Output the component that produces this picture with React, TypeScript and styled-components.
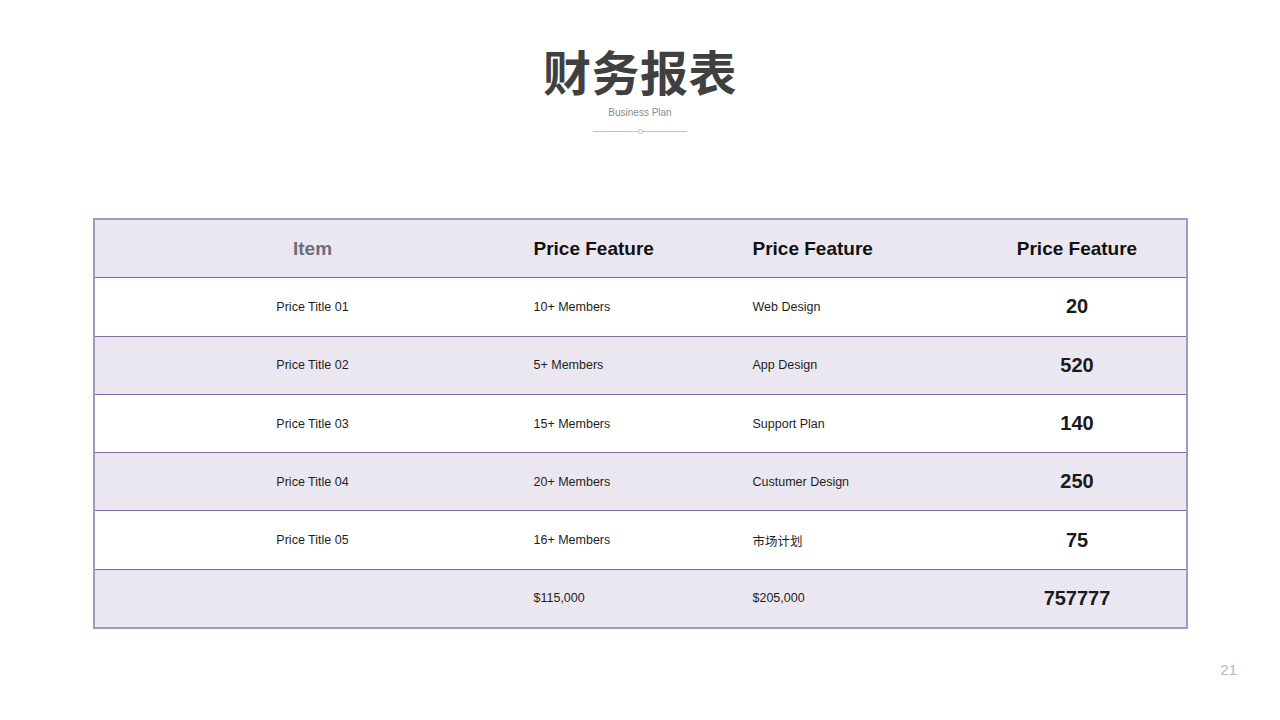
import styled, { createGlobalStyle } from 'styled-components';

const GlobalStyle = createGlobalStyle`
  html, body {
    margin: 0;
    padding: 0;
    background: #ffffff;
  }
  body {
    font-family: "Liberation Sans", Arial, "Noto Sans CJK SC", sans-serif;
  }
`;

const Page = styled.div`
  width: 1280px;
  height: 720px;
  box-sizing: border-box;
  padding-top: 40px;
  display: flex;
  flex-direction: column;
  align-items: center;
  position: relative;
  overflow: hidden;
`;

const Title = styled.h1`
  margin: 0;
  font-family: "Noto Sans CJK SC", sans-serif;
  font-size: 48px;
  font-weight: 700;
  line-height: 60px;
  color: #404040;
  letter-spacing: 0.5px;
`;

const Subtitle = styled.div`
  font-size: 10px;
  line-height: 14px;
  color: #8a8a8a;
  margin-top: 6px;
`;

const Divider = styled.div`
  display: flex;
  align-items: center;
  margin-top: 9px;
  width: 94px;
`;

const DividerLine = styled.div`
  flex: 1;
  height: 1px;
  background: #c4c4c4;
`;

const DividerDot = styled.div`
  width: 3px;
  height: 3px;
  border: 1px solid #bdbdbd;
  border-radius: 50%;
`;

const Table = styled.div`
  margin-top: 84px;
  width: 1095px;
  box-sizing: border-box;
  border: 2px solid #a996c0;
  display: grid;
  grid-template-columns: 436px 219px 219px 1fr;
`;

const Row = styled.div<{ $shade?: boolean; $last?: boolean }>`
  display: contents;
  & > div {
    background: ${(p) => (p.$shade ? '#ebe7f0' : '#ffffff')};
    border-bottom: ${(p) => (p.$last ? 'none' : '1px solid #85679c')};
  }
`;

const Cell = styled.div<{ $align?: 'left' | 'center' }>`
  height: 57.3px;
  display: flex;
  align-items: center;
  justify-content: ${(p) => (p.$align === 'center' ? 'center' : 'flex-start')};
  padding-left: ${(p) => (p.$align === 'center' ? '0' : '3px')};
  font-size: 12px;
  color: #1e1e1e;
`;

const HeadText = styled.span<{ $muted?: boolean }>`
  font-size: 19px;
  font-weight: 700;
  color: ${(p) => (p.$muted ? '#6e6c7a' : '#111111')};
`;

const Amount = styled.span`
  font-size: 20px;
  font-weight: 700;
  color: #1a1a1a;
`;

const SmallText = styled.span`
  font-size: 12.5px;
  color: #1e1e1e;
`;

const PageNumber = styled.div`
  position: absolute;
  right: 43px;
  top: 661px;
  font-size: 15px;
  color: #b8b8b8;
`;

const rows = [
  { title: 'Price Title 01', members: '10+ Members', plan: 'Web Design', value: '20' },
  { title: 'Price Title 02', members: '5+ Members', plan: 'App Design', value: '520' },
  { title: 'Price Title 03', members: '15+ Members', plan: 'Support Plan', value: '140' },
  { title: 'Price Title 04', members: '20+ Members', plan: 'Custumer Design', value: '250' },
  { title: 'Price Title 05', members: '16+ Members', plan: '市场计划', value: '75' },
];

const App = () => {
  return (
    <Page>
      <GlobalStyle />
      <Title>财务报表</Title>
      <Subtitle>Business Plan</Subtitle>
      <Divider>
        <DividerLine />
        <DividerDot />
        <DividerLine />
      </Divider>

      <Table>
        <Row $shade>
          <Cell $align="center">
            <HeadText $muted>Item</HeadText>
          </Cell>
          <Cell>
            <HeadText>Price Feature</HeadText>
          </Cell>
          <Cell>
            <HeadText>Price Feature</HeadText>
          </Cell>
          <Cell $align="center">
            <HeadText>Price Feature</HeadText>
          </Cell>
        </Row>
        {rows.map((row, i) => (
          <Row key={row.title} $shade={i % 2 === 1}>
            <Cell $align="center">
              <SmallText>{row.title}</SmallText>
            </Cell>
            <Cell>
              <SmallText>{row.members}</SmallText>
            </Cell>
            <Cell>
              <SmallText>{row.plan}</SmallText>
            </Cell>
            <Cell $align="center">
              <Amount>{row.value}</Amount>
            </Cell>
          </Row>
        ))}
        <Row $shade $last>
          <Cell $align="center" />
          <Cell>
            <SmallText>$115,000</SmallText>
          </Cell>
          <Cell>
            <SmallText>$205,000</SmallText>
          </Cell>
          <Cell $align="center">
            <Amount>757777</Amount>
          </Cell>
        </Row>
      </Table>

      <PageNumber>21</PageNumber>
    </Page>
  );
};

export default App;
